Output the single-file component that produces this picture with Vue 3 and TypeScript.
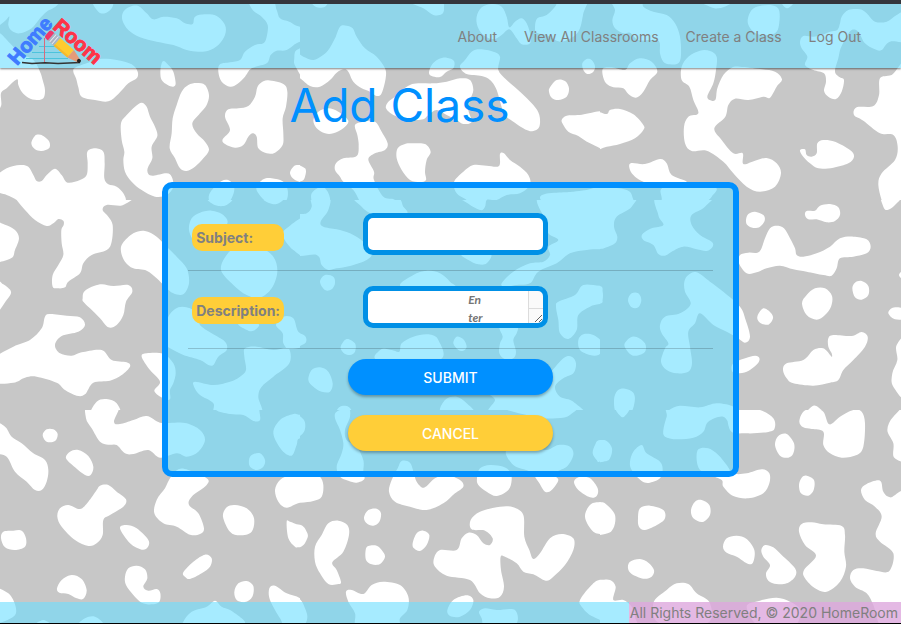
<script setup lang="ts">
import { ref } from 'vue'

interface Tile {
  x: number
  y: number
  w: number
  h: number
  blobs: string[]
}

// Composition-book marbling. Each tile lists the outlines of its blobs at three units per pixel.
const tiles: Tile[] = [
  {
    x: 0, y: 0, w: 300, h: 200,
    blobs: [
      '-20,-20 180,-20 172,15 140,35 120,55 95,85 60,100 35,92 25,75 28,50 18,60 0,75 -20,85',
      '-20,100 0,100 30,130 60,160 100,180 120,215 128,240 135,270 130,295 110,300 85,293 65,275 55,255 52,238 35,250 20,265 3,280 3,318 -20,330',
      '220,215 225,203 260,190 300,177 350,180 395,193 413,215 410,235 385,250 355,282 325,304 285,300 245,290 235,262 228,235',
      '485,190 492,183 505,195 520,215 527,250 520,260 503,255 485,240 481,215',
      '280,5 335,5 335,25 315,40 295,35',
      '367,60 370,35 390,20 415,18 440,40 460,58 490,50 530,55 555,70 578,72 585,50 615,43 650,48 675,75 675,105 655,135 625,152 595,155 560,150 520,135 470,125 420,112 385,90',
      '750,0 758,30 785,50 803,75 800,110 790,130 765,135 735,155 720,180 690,187 660,193 655,215 665,245 690,260 712,252 735,230 755,205 800,190 812,165 830,152 860,150 900,125 960,125 960,80 900,80 868,65 840,55 830,30 815,0',
      '930,150 890,150 883,175 887,200 930,260',
      '425,308 440,320 450,350 465,380 472,408 455,440 457,475 443,505 445,522 460,527 500,520 515,530 520,560 500,585 465,590 425,570 395,545 375,515 370,480 373,455 365,420 363,370 380,345 405,320',
      '590,249 615,255 627,285 620,315 600,340 577,370 590,400 615,425 627,450 610,475 585,500 560,513 540,505 525,475 509,445 515,400 518,355 530,315 545,275 565,255',
      '785,247 805,241 850,252 862,275 858,320 848,355 850,400 848,435 825,458 800,460 775,445 770,410 758,400 745,410 730,435 705,443 675,432 668,418 690,390 675,350 685,328 715,325 745,318 765,290 772,262',
      '105,407 120,404 130,408 148,425 147,445 125,453 105,448 94,430',
      '-10,530 20,505 60,495 85,500 100,525 110,543 125,543 140,525 165,506 185,525 203,548 240,540 260,525 263,490 262,455 285,445 310,455 314,490 313,535 325,553 350,560 370,580 376,605 340,618 330,640 100,640 75,625 50,600 20,585 -10,572',
      '870,520 880,500 895,495 920,500 920,545 885,540',
      '632,575 665,543 690,543 703,565 695,595 675,615 645,617 627,600',
      '770,560 790,538 815,535 850,545 863,570 860,600 840,610 800,605 775,580'
    ]
  },
  {
    x: 300, y: 0, w: 300, h: 200,
    blobs: [
      '-20,155 10,170 40,180 65,168 85,150 105,115 120,80 140,77 158,85 170,110 195,145 230,170 255,205 257,235 245,280 230,288 210,275 185,265 160,245 145,215 132,208 110,218 90,240 60,260 30,258 0,235 -20,225',
      '330,5 370,25 400,45 425,43 432,25 420,5',
      '35,5 80,5 75,20 50,22',
      '530,50 545,22 575,12 605,20 620,50 628,82 645,65 665,55 680,70 690,100 690,130 665,133 650,115 628,88 605,105 580,118 550,105 533,80',
      '705,80 712,55 740,45 765,20 785,-5 860,-5 850,40 840,85 820,110 780,125 740,105 710,98',
      '387,218 395,195 415,178 440,173 462,183 460,205 440,215 420,231 395,228',
      '480,200 495,180 515,155 540,148 580,155 600,170 595,210 620,240 660,275 700,315 718,345 718,380 700,393 680,390 640,365 612,340 590,270 570,240 545,228 500,222',
      '258,325 265,305 285,290 300,275 330,255 355,250 400,250 440,245 480,235 510,240 520,270 510,300 505,330 515,365 490,372 470,360 440,345 410,330 385,345 370,358 340,360 310,355 280,345',
      '40,360 55,335 85,325 115,335 145,362 130,385 100,400 75,400 50,385',
      '165,375 190,365 225,365 245,395 263,430 255,450 225,460 205,478 222,515 222,540 250,590 285,600 310,640 200,640 180,605 160,570 130,545 120,530 105,510 108,490 130,475 170,468 176,435 172,405',
      '340,430 375,432 392,455 380,480 375,515 378,540 360,546 330,540 305,510 290,475 293,445 315,432',
      '462,546 490,515 520,495 560,497 597,498 600,462 612,460 630,480 660,500 685,525 690,555 660,580 620,585 590,600 560,600 555,625 530,628 500,600 470,580',
      '-20,495 15,505 15,530 5,543 -20,543',
      '35,605 35,580 55,563 75,565 90,595 85,640 45,640',
      '847,190 860,177 875,180 885,198 880,215 862,222 850,210',
      '750,262 770,240 795,243 807,265 800,290 775,300 755,293 747,275',
      '790,375 785,360 800,347 840,345 930,340 930,445 870,430 835,408 805,395',
      '720,595 735,582 790,577 820,575 860,570 930,560 930,640 735,640 740,620'
    ]
  },
  {
    x: 600, y: 0, w: 301, h: 200,
    blobs: [
      '35,-5 45,30 37,60 45,85 70,100 90,98 115,120 155,120 178,125 180,160 190,185 210,193 235,190 243,165 240,110 225,70 200,45 160,35 130,20 120,-5',
      '300,0 330,20 355,25 385,15 410,-5',
      '545,5 560,25 580,10 575,-5',
      '443,65 455,30 480,18 515,16 537,30 537,75 525,100 490,105 460,95',
      '712,90 720,70 725,50 745,30 780,28 800,40 825,65 860,65 890,45 930,30 930,120 870,125 845,150 825,148 795,130 775,95 755,90 740,110 722,145 715,175 705,215 720,232 732,240 725,275 708,297 685,290 672,272 678,245 672,220 640,210 615,195 622,170 605,145 600,125 610,108 640,110 665,105 690,95',
      '245,240 245,200 265,170 300,152 330,153 350,170 348,210 340,250 322,290 335,302 347,298 352,265 370,225 395,203 420,200 480,207 525,215 546,238 530,260 510,293 490,290 445,300 405,296 385,315 376,350 343,385 365,420 400,460 428,460 430,492 465,482 500,474 530,490 543,520 525,560 480,575 440,560 400,520 370,485 320,452 275,453 255,430 252,380 265,350 295,340 280,300 268,260',
      '8,225 10,205 35,202 75,210 90,190 120,175 155,185 172,215 150,240 130,275 108,293 85,282 70,265 40,262 18,250',
      '-20,342 20,342 30,330 60,327 100,343 130,375 130,390 105,415 60,432 20,440 -20,443',
      '90,510 92,490 135,492 180,477 200,490 215,525 260,547 180,560 130,545 105,530',
      '930,200 875,225 840,235 837,285 820,318 770,322 762,345 790,362 840,400 880,405 893,440 885,480 845,520 835,555 848,610 860,630 880,615 930,570',
      '600,450 615,448 620,465 635,470 650,460 652,430 670,420 705,425 750,450 762,470 745,490 700,503 655,505 630,490 608,468',
      '-20,555 30,562 80,570 97,590 98,640 -20,640',
      '175,640 185,600 195,560 340,560 335,590 300,620 270,640'
    ]
  },
  {
    x: 0, y: 200, w: 300, h: 210,
    blobs: [
      '30,-30 50,0 75,30 105,60 140,78 160,70 175,57 190,62 191,75 184,90 185,130 190,165 175,195 158,225 158,260 175,265 195,262 205,245 240,220 250,190 275,165 320,150 335,125 338,75 325,50 308,30 320,15 370,15 375,-20',
      '-20,72 15,74 45,90 57,115 45,150 33,175 -20,178',
      '-20,240 10,253 33,275 20,300 -20,345',
      '363,155 368,130 400,100 435,93 470,110 500,140 530,170 560,205 567,250 550,283 520,280 495,260 470,235 440,212 400,205 375,185',
      '248,295 255,272 300,253 340,258 385,255 397,275 378,305 370,345 350,375 325,382 300,355 270,325 250,305',
      '-20,480 40,440 90,420 125,385 135,350 150,342 200,347 240,352 255,375 235,395 185,408 165,435 180,460 215,467 245,457 305,450 335,480 380,487 390,500 365,525 330,542 280,548 255,583 230,587 195,570 170,548 110,530 75,533 40,548 -20,545',
      '425,470 440,460 490,462 520,490 527,520 520,550 510,570 510,598 490,595 463,573 480,545 450,510',
      '275,645 290,605 320,597 350,610 357,645',
      '567,90 575,55 600,38 635,32 670,45 680,75 620,130 585,125',
      '850,110 860,85 930,50 930,170 880,150',
      '663,210 680,165 710,145 780,145 820,170 832,215 815,265 780,293 740,285 700,255',
      '500,390 505,350 535,322 570,325 600,350 600,375 635,400 675,425 680,450 655,470 640,495 625,495 600,480 550,465 510,445 490,430',
      '715,372 775,372 765,390 745,392',
      '828,375 850,350 880,355 895,395 925,410 925,435 870,447 850,430 848,400',
      '735,445 770,440 820,450 865,445 868,490 820,530 785,560 775,590 780,650 650,650 640,610 600,585 582,560 585,545 640,555 690,545 720,530 738,510 733,470',
      '625,-5 695,-5 680,15 655,18 635,10',
      '790,-5 850,-5 830,12 805,8'
    ]
  },
  {
    x: 300, y: 200, w: 300, h: 210,
    blobs: [
      '35,-10 88,-10 85,30 62,65 70,80 110,88 150,100 190,125 215,160 200,180 150,198 110,205 85,210 65,195 50,165 -20,160 -20,55 20,40 35,20',
      '165,-10 185,20 210,40 250,60 290,70 322,40 310,20 285,-10',
      '460,-20 495,5 540,30 555,20 560,0 580,-10',
      '725,-20 735,60 745,100 775,120 745,140 750,165 730,185 690,190 640,215 605,250 615,260 650,255 690,250 715,215 770,190 810,160 860,150 900,148 960,148 960,-20',
      '60,245 75,225 100,230 105,250 95,268 75,270',
      '485,160 570,160 560,190 535,193 505,180',
      '305,260 340,225 380,212 420,220 450,245 460,265',
      '768,320 775,305 825,285 850,255 900,257 960,257 960,308 900,312 870,320 835,345 830,390 805,417 780,400 775,360',
      '600,380 650,380 650,400 640,420 648,455 640,475 615,478 598,460 600,430 608,410',
      '835,420 850,403 880,405 905,425 905,450 895,465 870,465 840,450',
      '122,440 140,417 165,430 165,455 150,465 130,458',
      '-20,398 15,408 15,430 -20,440',
      '235,480 245,447 275,450 298,455 305,430 340,410 385,403 415,420 417,480',
      '460,430 470,410 490,418 500,440 490,452 475,450',
      '25,540 35,510 60,502 85,515 98,550 90,575 65,575 40,560',
      '750,520 790,475 815,470 828,490 820,520 790,535 765,560 780,590 820,605 840,650 580,650 585,600 575,580 700,580',
      '425,640 435,600 470,590 500,610 520,640',
      '110,640 120,620 145,620 155,640'
    ]
  },
  {
    x: 600, y: 200, w: 301, h: 210,
    blobs: [
      '-60,-20 100,-20 95,20 50,50 42,80 52,110 45,130 20,142 0,147 -60,147',
      '175,-20 335,-20 315,20 275,45 275,75 300,105 335,125 338,140 320,153 290,148 250,140 215,155 195,167 175,162 160,135 130,120 127,103 155,85 190,75 175,45',
      '253,245 265,225 290,217 330,245 370,275 420,320 437,360 450,410 435,428 410,412 380,395 340,375 300,340 285,370 265,395 270,440 276,490 265,515 230,520 200,510 183,485 195,445 205,430 185,400 180,375 195,350 240,340 272,312 255,275',
      '438,60 445,42 465,35 490,45 494,62 480,80 460,84 442,75',
      '615,45 620,33 645,32 660,17 690,12 715,22 720,45 705,63 680,67 650,58 625,58',
      '845,-20 850,20 862,30 885,15 910,-20',
      '417,190 420,165 445,158 478,155 495,115 510,85 530,77 552,85 570,115 585,145 590,165 610,170 650,160 690,140 720,115 760,110 800,118 812,140 800,160 760,170 720,175 710,205 695,227 670,225 620,215 580,208 540,197 500,205 470,217 440,220',
      '757,265 765,248 785,243 805,258 805,285 785,299 765,292',
      '606,310 620,285 645,265 675,265 696,288 693,320 675,345 650,359 620,345',
      '472,350 490,325 512,338 519,355 505,374 480,368',
      '865,340 875,325 895,322 920,330 920,355 885,358',
      '897,225 920,205 920,245',
      '84,300 95,280 115,280 124,300 115,322 95,322',
      '73,435 90,413 110,411 135,430 135,455 110,467 90,462',
      '-60,257 0,258 8,275 8,298 0,311 -60,311',
      '549,510 560,490 610,480 640,450 665,444 680,452 695,470 695,460 685,440 685,415 700,405 755,408 785,396 803,410 795,440 760,480 730,510 715,540 690,548 640,557 580,550 560,535',
      '930,410 890,435 892,480 877,520 880,560 930,600',
      '400,490 450,470 475,470 475,488 440,515 400,518',
      '42,600 52,572 75,566 100,578 104,605 90,640 50,640',
      '215,640 235,618 300,622 350,610 400,620 400,640',
      '615,650 640,617 665,630 680,650'
    ]
  },
  {
    x: 0, y: 410, w: 300, h: 214,
    blobs: [
      '-20,40 15,50 35,80 65,100 100,130 135,150 145,180 140,215 125,240 105,240 80,215 45,185 20,140 -20,120',
      '128,75 140,58 160,58 173,72 165,93 140,95',
      '198,145 210,125 235,120 265,138 280,170 272,195 255,195 225,172',
      '265,-20 258,25 275,55 300,95 325,104 350,105 375,130 400,132 445,120 480,143 530,130 560,140 595,125 615,90 600,60 560,40 520,38 480,38 440,18 400,30 360,42 342,35 355,-20',
      '510,205 535,178 565,180 620,205 620,225 575,260 567,285 595,310 612,355 600,372 570,374 530,350 490,340 463,310 470,270 495,235',
      '172,320 180,295 205,285 240,297 265,275 290,240 300,227 325,225 350,245 378,268 370,290 330,315 310,330 308,375 290,400 265,408 225,390 185,350',
      '3,385 10,365 40,362 65,362 78,385 75,410 45,420 15,412',
      '360,355 380,345 410,355 445,390 443,412 425,419 390,400',
      '669,320 680,292 705,285 740,295 762,325 755,365 720,376 690,365',
      '375,500 385,475 410,467 435,478 442,505 430,530 445,542 470,537 481,550 478,575 455,583 425,578 400,555 378,525',
      '550,487 580,455 615,434 635,445 630,470 605,490 570,507 555,500',
      '171,535 185,510 215,495 245,507 260,540 250,566 230,565 205,552 178,548',
      '703,545 715,520 740,513 760,528 757,560 735,576 710,570',
      '808,535 825,527 860,550 900,565 930,600 930,650 860,650 840,625 810,570',
      '825,240 840,210 870,195 900,190 960,190 960,278 900,278 860,293 835,275',
      '860,335 870,335 900,344 960,344 960,412 900,412 885,410 865,385',
      '-20,540 25,550 47,590 40,620 -20,635',
      '550,635 575,605 620,590 645,572 665,590 690,600 725,625 735,640 720,660 550,660',
      '235,650 255,625 285,620 310,640 310,660',
      '100,650 130,630 155,650',
      '820,70 840,30 880,12 900,14 960,14 960,85 900,85 890,105 875,137 845,120',
      '747,150 755,135 780,130 795,150 790,170 770,180 750,170',
      '645,-30 648,0 690,12 730,15 760,33 780,30 778,0 778,-30'
    ]
  },
  {
    x: 300, y: 410, w: 300, h: 214,
    blobs: [
      '105,25 110,5 145,-5 150,20 135,60 140,90 170,110 190,150 190,185 193,207 170,218 145,212 120,200 110,170 125,130 130,100 120,60',
      '-60,190 0,190 35,185 60,200 70,225 65,260 40,273 0,278 -60,278',
      '293,175 305,153 330,158 342,190 350,215 372,233 405,205 440,195 480,210 490,230 465,250 430,280 380,300 330,290 285,275 267,245 275,210',
      '531,205 540,175 570,165 610,170 630,185 635,210 625,240 590,258 560,245 535,225',
      '620,120 700,110 740,120 775,105 810,110 820,135 800,170 760,190 775,210 755,240 735,245 715,215 690,185 640,165',
      '822,215 840,200 870,205 893,235 890,258 870,262 835,240',
      '878,130 885,105 900,90 960,90 960,155 900,155 890,150',
      '855,320 870,285 900,276 960,276 960,372 900,372 875,360',
      '-60,344 0,344 20,365 22,385 0,412 -60,412',
      '192,322 205,300 230,296 243,310 238,335 220,347 200,340',
      '197,420 205,408 230,407 245,420 255,440 240,462 215,463 198,450',
      '338,400 350,370 370,362 388,375 380,405 360,423 342,415',
      '45,410 65,375 85,340 115,332 142,345 147,375 130,425 97,457 110,480 123,515 115,522 85,522 60,490 45,455',
      '402,445 420,420 470,420 485,385 505,368 530,375 550,400 570,405 578,385 555,362 515,358 512,330 540,305 600,290 640,292 670,315 673,380 688,420 700,447 720,430 750,385 785,372 820,385 820,420 795,465 760,500 737,512 700,493 670,485 650,460 615,440 602,440 603,480 612,530 600,560 570,565 540,550 510,510 440,497 405,470',
      '138,545 155,540 190,552 215,525 250,515 300,525 325,560 322,600 300,625 290,660 175,660 165,610 145,575',
      '442,600 460,570 500,556 520,570 510,600 480,620 450,618',
      '537,605 555,595 590,600 645,600 645,645 560,660 545,625',
      '840,570 870,530 900,509 960,509 960,640 880,620 845,590',
      '580,-20 820,-20 810,15 770,25 700,20',
      '-20,15 12,30 12,65 -20,85',
      '-40,540 0,568 15,595 22,622 10,645 -40,650'
    ]
  },
  {
    x: 600, y: 410, w: 301, h: 214,
    blobs: [
      '190,60 200,20 215,-20 400,-20 400,55 370,20 325,35 310,65 280,83 230,88 195,80',
      '390,-20 480,0 520,25 524,55 505,66 440,70 390,60',
      '598,35 610,5 640,-5 670,5 688,43 720,20 760,0 785,5 795,40 790,110 770,135 725,143 690,130 670,105 670,65 635,57 610,52',
      '930,-10 880,20 862,60 880,100 883,143 930,143',
      '525,105 535,78 560,72 582,100 580,130 565,143 540,137',
      '90,155 100,125 125,105 140,130 180,155 188,180 180,205 150,218 125,213 95,180',
      '-60,90 0,90 20,93 36,115 30,145 10,155 -60,155',
      '290,150 295,118 325,115 355,135 380,165 400,190 440,190 485,178 508,190 508,220 490,250 445,265 400,258 370,230 365,210 330,195 300,180',
      '45,-10 68,22 90,-10',
      '597,225 605,203 620,197 642,210 641,240 625,257 603,250',
      '114,325 120,295 150,287 190,300 195,325 175,343 135,360 117,350',
      '273,300 285,275 305,270 328,285 330,315 308,336 280,325',
      '-60,276 0,276 20,284 45,315 40,355 15,372 -60,372',
      '369,410 380,385 410,377 440,387 463,420 460,455 445,462 410,440 380,428',
      '484,420 495,405 520,412 545,435 585,475 585,500 560,520 530,522 505,512 498,490 510,465 490,440',
      '597,365 605,342 635,337 670,343 725,348 735,375 733,425 738,470 720,515 680,545 645,535 615,505 612,480 648,437 615,405',
      '783,240 800,222 840,212 850,245 870,262 930,272 930,660 850,660 820,585 800,550 765,530 750,505 760,480 790,475 830,483 868,483 880,430 840,395 827,370 845,320 825,290 795,270',
      '84,475 90,455 120,447 145,458 162,480 155,500 130,506 95,492',
      '-60,509 0,509 30,510 47,530 40,570 70,570 95,590 105,620 100,660 -60,660',
      '160,580 200,540 230,520 265,522 290,550 330,580 320,640 180,640',
      '440,590 480,572 530,563 570,575 600,600 580,650 480,650'
    ]
  }
]

// Closed Catmull-Rom spline through the points, written as cubic curves.
function outline(points: string): string {
  const p = points.split(' ').map((pair) => pair.split(',').map(Number))
  const n = p.length
  let d = `M${p[0][0]} ${p[0][1]}`
  for (let i = 0; i < n; i++) {
    const a = p[(i + n - 1) % n]
    const b = p[i]
    const c = p[(i + 1) % n]
    const e = p[(i + 2) % n]
    d += `C${b[0] + (c[0] - a[0]) / 6} ${b[1] + (c[1] - a[1]) / 6} ${c[0] - (e[0] - b[0]) / 6} ${c[1] - (e[1] - b[1]) / 6} ${c[0]} ${c[1]}`
  }
  return d + 'Z'
}

const marble = tiles.map((t) => ({ ...t, d: t.blobs.map(outline).join('') }))
const links = ['About', 'View All Classrooms', 'Create a Class', 'Log Out']
const hint = 'En\nter'
const subject = ref('')
const description = ref('')

function reset() {
  subject.value = ''
  description.value = ''
}
</script>

<template>
  <div class="page">
    <svg class="marble" viewBox="0 0 901 624" preserveAspectRatio="xMidYMin slice" aria-hidden="true">
      <svg v-for="t in marble" :key="`${t.x}-${t.y}`" :x="t.x" :y="t.y" :width="t.w" :height="t.h" :viewBox="`0 0 ${t.w * 3} ${t.h * 3}`">
        <path :d="t.d" fill="#fff" />
      </svg>
    </svg>

    <header class="nav">
      <a href="#" class="brand" aria-label="HomeRoom">
        <svg class="logo" width="112" height="64" viewBox="0 4 112 64">
          <g stroke="#4cc3dc" stroke-width="1">
            <path d="M39 46.500H56M32 52.500H62M26 58.500H68" />
          </g>
          <path d="M44.500 38V63" stroke="#d9697c" stroke-width="1" />
          <path d="M22 62.500L32 63.500L45 62.800L58 63.600L80 62.600" fill="none" stroke="#333" stroke-width="1.500" />
          <g transform="translate(48 34) rotate(41)">
            <rect x="-1" y="-5" width="7" height="10" rx="3" fill="#f0386b" />
            <rect x="4" y="-5" width="8" height="10" fill="#a9b4c4" />
            <path d="M6.500 -5V5M9.500 -5V5" stroke="#e9edf2" />
            <rect x="12" y="-5" width="18" height="10" fill="#ffcb2f" />
            <path d="M12 3H30V5H12Z" fill="#f5b82e" />
            <path d="M30 -5L42 -1.500V1.500L30 5Z" fill="#e59b78" />
            <circle cx="41" cy="0" r="2" fill="#222" />
          </g>
          <text class="mark" fill="#3f7cff" stroke="#3f7cff" transform="translate(17 66) rotate(-49)">Home</text>
          <text class="mark" fill="#ff3347" stroke="#ff3347" transform="translate(52 28) rotate(41)">Room</text>
        </svg>
      </a>
      <nav class="links">
        <a v-for="l in links" :key="l" href="#">{{ l }}</a>
      </nav>
    </header>

    <main class="main">
      <h1>Add Class</h1>
      <form class="panel" @submit.prevent>
        <div class="row first">
          <div class="name"><label for="subject">Subject:</label></div>
          <input id="subject" v-model="subject" type="text" />
        </div>
        <div class="row last">
          <div class="name"><label for="description">Description:</label></div>
          <textarea id="description" v-model="description" :placeholder="hint"></textarea>
        </div>
        <div class="actions">
          <button type="submit" class="submit">SUBMIT</button>
          <button type="button" class="cancel" @click="reset">CANCEL</button>
        </div>
      </form>
    </main>

    <footer class="footer">
      <span>All Rights Reserved, © 2020 HomeRoom</span>
    </footer>
  </div>
</template>

<style>
body {
  margin: 0;
}
</style>

<style scoped>
.page {
  position: relative;
  z-index: 0;
  display: flex;
  flex-direction: column;
  box-sizing: border-box;
  min-height: 100vh;
  overflow: hidden;
  border-top: 4px solid #35353b;
  border-bottom: 1px solid #000;
  background: #c7c7c7;
  color: #808080;
  font-family: Inter, 'Liberation Sans', sans-serif;
  font-size: 14px;
  line-height: 21px;
}
.marble {
  position: absolute;
  z-index: -1;
  top: -4px;
  left: 0;
  width: 100%;
  height: 100vh;
}
.nav {
  display: flex;
  justify-content: space-between;
  height: 64px;
  background: rgba(107, 222, 255, 0.6);
  box-shadow: 0 1px 2px rgba(0, 0, 0, 0.5);
}
.brand {
  display: block;
  height: 64px;
}
.logo {
  overflow: visible;
}
.mark {
  font-family: 'Liberation Sans', sans-serif;
  font-size: 20px;
  font-weight: 700;
  stroke-width: 1px;
}
.links {
  display: flex;
  align-items: center;
  gap: 27px;
  padding-right: 40px;
}
.links a {
  color: inherit;
  text-decoration: none;
}
.main {
  flex: 1;
}
h1 {
  margin: 8px 0 0;
  padding-right: 102px;
  color: #0090ff;
  font-size: 46px;
  font-weight: 400;
  line-height: 58px;
  text-align: center;
}
.panel {
  box-sizing: border-box;
  width: 64%;
  margin: 48px auto 0;
  padding: 0 20px 20px;
  border: 6px solid #0090ff;
  border-radius: 10px;
  background: rgba(107, 222, 255, 0.6);
}
.row {
  display: flex;
  align-items: flex-end;
  padding: 15px 4px;
  border-bottom: 1px solid rgba(0, 0, 0, 0.18);
}
.first {
  padding-top: 25px;
}
.last {
  padding-bottom: 20px;
}
.name {
  flex: 0 0 171px;
}
.name label {
  display: block;
  box-sizing: border-box;
  width: 92px;
  margin-bottom: 4px;
  padding: 3px 4px;
  border-radius: 10px;
  background: #ffce38;
  font-weight: 700;
  white-space: nowrap;
}
input,
textarea {
  box-sizing: border-box;
  width: 185px;
  height: 42px;
  margin: 0;
  border: 5px solid #0090e6;
  border-radius: 10px;
  outline: 0;
  background: #fff;
  color: #444;
  font: inherit;
}
textarea {
  padding: 0 16px 0 100px;
  background:
    linear-gradient(#dcdcdc, #dcdcdc) right 17px / 15px 1px no-repeat,
    linear-gradient(90deg, #dcdcdc 1px, #fafafa 1px) right top / 15px 100% no-repeat,
    #fff;
  font-family: Lato, cursive;
  font-size: 12px;
  font-style: italic;
  font-weight: 700;
  line-height: 18px;
  overflow: hidden;
}
textarea::placeholder {
  color: #757575;
}
.actions {
  display: flex;
  flex-direction: column;
  align-items: center;
  gap: 20px;
  padding-top: 10px;
}
button {
  width: 205px;
  height: 36px;
  padding: 0;
  border: 0;
  border-radius: 18px;
  box-shadow: 0 2px 3px rgba(0, 0, 0, 0.3);
  color: #fff;
  font: inherit;
  font-weight: 500;
  cursor: pointer;
}
.submit {
  background: #0090ff;
}
.cancel {
  background: #ffce38;
}
.footer {
  display: flex;
}
.footer::before {
  flex: 1;
  background: rgba(107, 222, 255, 0.6);
  content: '';
}
.footer span {
  padding: 0 3px 0 1px;
  background: rgba(221, 168, 221, 0.8);
}
</style>
